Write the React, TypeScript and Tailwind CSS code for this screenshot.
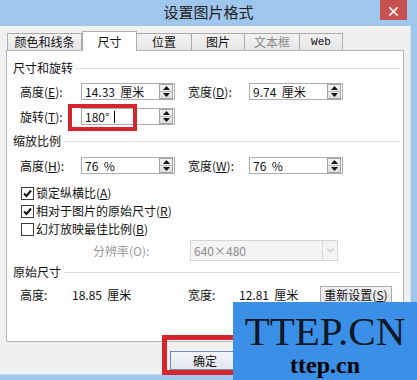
import React from "react";

function Spin() {
  return (
    <div className="flex h-[15px] w-[14px] flex-none flex-col border border-[#a3a3a3] bg-gradient-to-b from-[#f6f6f6] to-[#dedede]">
      <div className="flex flex-1 items-center justify-center border-b border-[#b8b8b8]">
        <svg width="7" height="4" viewBox="0 0 7 4">
          <path d="M3.5 0L7 4H0z" fill="#111" />
        </svg>
      </div>
      <div className="flex flex-1 items-center justify-center">
        <svg width="7" height="4" viewBox="0 0 7 4">
          <path d="M0 0h7L3.5 4z" fill="#111" />
        </svg>
      </div>
    </div>
  );
}

function SpinInput({ children }: { children: React.ReactNode }) {
  return (
    <div className="flex h-[17px] w-[94px] flex-none items-center justify-between border border-[#abadb3] bg-white pl-[3px] pr-[1px]">
      <span className="flex items-center whitespace-pre leading-[14px]">{children}</span>
      <Spin />
    </div>
  );
}

function Section({ title }: { title: string }) {
  return (
    <div className="flex h-[14px] items-center">
      <span className="leading-[14px]">{title}</span>
      <div className="ml-[3px] mr-[3px] h-px flex-1 bg-[#dcdcdc]" />
    </div>
  );
}

function Check({ checked, children }: { checked: boolean; children: React.ReactNode }) {
  return (
    <div className="ml-[8px] flex h-[18px] items-center gap-[2px]">
      <div className="flex h-[13px] w-[13px] items-center justify-center border border-[#3c3c3c] bg-white">
        {checked && (
          <svg width="9" height="9" viewBox="0 0 9 9">
            <path d="M1 4.5l2.5 2.5L8 1.5" stroke="#111" strokeWidth="2" fill="none" />
          </svg>
        )}
      </div>
      <span className="leading-[14px]">{children}</span>
    </div>
  );
}

const tabs = [
  { label: "颜色和线条", w: "w-[75px]" },
  { label: "尺寸", w: "w-[55px]", active: true },
  { label: "位置", w: "w-[55px]" },
  { label: "图片", w: "w-[53px]" },
  { label: "文本框", w: "w-[55px]", muted: true },
  { label: "Web", w: "w-[43px]", mono: true },
];

export default function App() {
  return (
    <div className="relative h-[380px] w-[417px] overflow-hidden bg-[#9fc6ec] font-['Noto_Sans_CJK_SC',sans-serif] text-[12px] text-[#111]">
      {/* title bar */}
      <div className="grid h-[26px] grid-cols-[1fr_auto_1fr] items-start">
        <div />
        <div className="pt-[3px] text-[15px] leading-[18px] text-[#222]">设置图片格式</div>
        <div className="flex justify-end pr-[10px]">
          <div className="flex h-[20px] w-[27px] items-center justify-center bg-[#c75050] text-[14px] font-bold leading-none text-white">
            ×
          </div>
        </div>
      </div>

      {/* body */}
      <div className="h-[348px] w-[411px] border-r border-[#c9dff3] bg-[#f0f0f0] pl-[6px] pt-[5px]">
        <div className="flex h-[19px] items-end pl-[1px]">
          {tabs.map((t) =>
            t.active ? (
              <div
                key={t.label}
                className={`relative z-10 -mb-px flex h-[20px] ${t.w} items-center justify-center border border-b-0 border-[#acacac] bg-white leading-[14px]`}
              >
                {t.label}
              </div>
            ) : (
              <div
                key={t.label}
                className={`flex h-[17px] ${t.w} items-center justify-center border border-b-0 border-l-0 border-[#acacac] bg-gradient-to-b from-[#f2f2f2] to-[#e6e6e6] leading-[14px] first:border-l ${t.muted ? "text-[#8a8a8a]" : ""} ${t.mono ? "font-['Liberation_Mono',monospace] text-[11px]" : ""}`}
              >
                {t.label}
              </div>
            ),
          )}
        </div>

        {/* panel */}
        <div className="h-[292px] w-[398px] border border-[#b5b5b5] bg-white pl-[6px] pt-[10px]">
          <Section title="尺寸和旋转" />
          <div className="ml-[7px] mt-[8px] flex items-center">
            <span className="w-[61px] leading-[14px]">
              高度(<u>E</u>):
            </span>
            <SpinInput>{"14.33  厘米"}</SpinInput>
            <span className="ml-[13px] w-[61px] leading-[14px]">
              宽度(<u>D</u>):
            </span>
            <SpinInput>{"9.74  厘米"}</SpinInput>
          </div>
          <div className="ml-[7px] mt-[8px] flex items-center">
            <span className="w-[61px] leading-[14px]">
              旋转(<u>T</u>):
            </span>
            <SpinInput>
              180°
              <span className="ml-[5px] inline-block h-[12px] w-px bg-black" />
            </SpinInput>
          </div>

          <div className="mt-[9px]">
            <Section title="缩放比例" />
          </div>
          <div className="ml-[7px] mt-[9px] flex items-center">
            <span className="w-[61px] leading-[14px]">
              高度(<u>H</u>):
            </span>
            <SpinInput>{"76  %"}</SpinInput>
            <span className="ml-[13px] w-[61px] leading-[14px]">
              宽度(<u>W</u>):
            </span>
            <SpinInput>{"76  %"}</SpinInput>
          </div>

          <div className="mt-[10px]">
            <Check checked>
              锁定纵横比(<u>A</u>)
            </Check>
            <Check checked>
              相对于图片的原始尺寸(<u>R</u>)
            </Check>
            <Check checked={false}>
              幻灯放映最佳比例(<u>B</u>)
            </Check>
          </div>

          <div className="mt-[2px] flex items-center">
            <span className="ml-[80px] w-[97px] leading-[14px] text-[#9a9a9a]">分辨率(O):</span>
            <div className="flex h-[21px] w-[148px] items-center justify-between border border-[#d5d5d5] bg-[#f4f4f4] pl-[3px]">
              <span className="leading-[14px] text-[#8c8c8c]">640×480</span>
              <div className="flex h-full w-[15px] items-center justify-center border-l border-[#dcdcdc]">
                <svg width="7" height="5" viewBox="0 0 7 5">
                  <path d="M0.5 0.5L3.5 4L6.5 0.5" stroke="#b0b0b0" fill="none" />
                </svg>
              </div>
            </div>
          </div>

          <div className="mt-[4px]">
            <Section title="原始尺寸" />
          </div>
          <div className="ml-[7px] mt-[7px] flex h-[17px] items-center">
            <span className="w-[52px] leading-[14px]">高度:</span>
            <span className="w-[116px] whitespace-pre leading-[14px]">{"18.85  厘米"}</span>
            <span className="w-[51px] leading-[14px]">宽度:</span>
            <span className="w-[81px] whitespace-pre leading-[14px]">{"12.81  厘米"}</span>
            <div className="flex h-[17px] w-[72px] items-center justify-center border border-[#acacac] bg-gradient-to-b from-[#f2f2f2] to-[#e4e4e4] leading-[14px]">
              重新设置(<u>S</u>)
            </div>
          </div>
        </div>

        {/* buttons */}
        <div className="mt-[9px] flex pl-[164px]">
          <div className="flex h-[19px] w-[70px] items-center justify-center border border-[#6f8fb5] bg-gradient-to-b from-[#f2f4f7] to-[#e3e8ee] leading-[14px]">
            确定
          </div>
        </div>
      </div>
      <div className="h-px w-[411px] bg-[#c9dff3]" />

      {/* red highlight marks */}
      <div className="absolute left-[68px] top-[104px] h-[27px] w-[69px] border-[4px] border-[#d4262c]" />
      <div className="absolute left-[162px] top-[335px] h-[40px] w-[80px] border-[5px] border-[#d4262c]" />

      {/* watermark */}
      <div className="absolute bottom-0 right-0 flex h-[78px] w-[184px] flex-col items-center bg-[#3b8fe6] pt-[9px]">
        <span className="font-['Liberation_Serif',serif] text-[41px] leading-[40px] text-[#0b1826]">TTEP.CN</span>
        <span className="mt-[3px] font-['Liberation_Serif',serif] text-[24px] font-bold leading-[22px] text-black">ttep.cn</span>
      </div>
    </div>
  );
}
